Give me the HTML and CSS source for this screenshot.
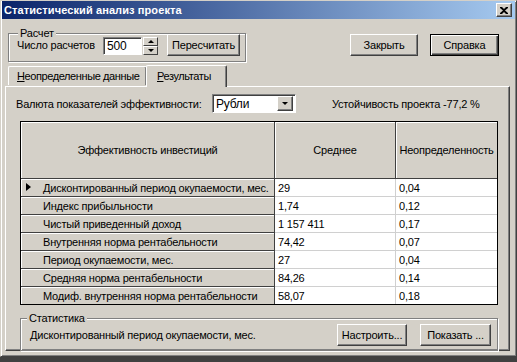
FILE: index.html
```html
<!DOCTYPE html>
<html>
<head>
  <title>Статистический анализ проекта</title>
  <link rel="stylesheet" href="styles.css">
</head>
<body>
  <div class="window">
    <div class="titlebar">
      <span class="title">Статистический анализ проекта</span>
      <span class="close">
        <svg width="8" height="7" viewBox="0 0 8 7"><path d="M0 0h2l2 2 2-2h2v1L5 3.5 8 6v1H6L4 5 2 7H0V6l3-2.5L0 1z" fill="#000"/></svg>
      </span>
    </div>

    <div class="toprow">
      <fieldset class="group calc">
        <legend>Расчет</legend>
        <div class="group-body">
          <span class="label">Число расчетов</span>
          <div class="spin">
            <div class="field">500</div>
            <div class="spin-btns">
              <span class="spin-btn"><i class="arrow up"></i></span>
              <span class="spin-btn"><i class="arrow down"></i></span>
            </div>
          </div>
          <button class="btn recalc">Пересчитать</button>
        </div>
      </fieldset>
      <div class="actions">
        <button class="btn close-btn">Закрыть</button>
        <button class="btn default help-btn">Справка</button>
      </div>
    </div>

    <div class="tabs">
      <div class="tab"><u>Н</u>еопределенные данные</div>
      <div class="tab active"><u>Р</u>езультаты</div>
    </div>

    <div class="panel">
      <div class="currency">
        <span class="label">Валюта показателей эффективности:</span>
        <div class="combo">
          <span class="combo-value">Рубли</span>
          <span class="combo-btn"><i class="arrow down"></i></span>
        </div>
        <span class="stability">Устойчивость проекта -77,2 %</span>
      </div>

      <table class="grid">
        <colgroup>
          <col class="c1"><col class="c2"><col class="c3">
        </colgroup>
        <thead>
          <tr>
            <th>Эффективность инвестиций</th>
            <th>Среднее</th>
            <th>Неопределенность</th>
          </tr>
        </thead>
        <tbody>
          <tr class="current"><th><i class="marker"></i>Дисконтированный период окупаемости, мес.</th><td>29</td><td>0,04</td></tr>
          <tr><th>Индекс прибыльности</th><td>1,74</td><td>0,12</td></tr>
          <tr><th>Чистый приведенный доход</th><td>1 157 411</td><td>0,17</td></tr>
          <tr><th>Внутренняя норма рентабельности</th><td>74,42</td><td>0,07</td></tr>
          <tr><th>Период окупаемости, мес.</th><td>27</td><td>0,04</td></tr>
          <tr><th>Средняя норма рентабельности</th><td>84,26</td><td>0,14</td></tr>
          <tr><th>Модиф. внутренняя норма рентабельности</th><td>58,07</td><td>0,18</td></tr>
        </tbody>
      </table>

      <fieldset class="group stats">
        <legend>Статистика</legend>
        <div class="group-body">
          <span class="label">Дисконтированный период окупаемости, мес.</span>
          <button class="btn setup-btn">Настроить...</button>
          <button class="btn show-btn">Показать ...</button>
        </div>
      </fieldset>
    </div>
  </div>
</body>
</html>
```

FILE: styles.css
```css
* {
  box-sizing: border-box;
}

html, body {
  margin: 0;
  padding: 0;
}

body {
  width: 517px;
  height: 362px;
  background: #404040;
  font-family: "Liberation Sans", Arial, sans-serif;
  font-size: 11px;
  letter-spacing: -0.2px;
  color: #000;
  overflow: hidden;
}

.window {
  width: 517px;
  height: 357px;
  background: #d4d0c8;
  border: 1px solid;
  border-color: #d4d0c8 #404040 #404040 #d4d0c8;
  box-shadow: inset 1px 1px #fff, inset -1px -1px #808080;
}

/* title bar */

.titlebar {
  height: 18px;
  margin: 0 1px;
  display: flex;
  align-items: center;
  justify-content: space-between;
  padding: 0 3px 0 2px;
  background: linear-gradient(to right, #0a246a, #a6caf0);
}

.title {
  color: #fff;
  font-weight: bold;
  font-size: 11px;
  letter-spacing: 0.1px;
}

.close {
  width: 16px;
  height: 14px;
  display: flex;
  align-items: center;
  justify-content: center;
  background: #d4d0c8;
  border: 1px solid;
  border-color: #fff #404040 #404040 #fff;
  box-shadow: inset -1px -1px #808080;
}

/* shared controls */

.btn {
  font: inherit;
  letter-spacing: inherit;
  color: #000;
  margin: 0;
  padding: 0;
  height: 22px;
  background: #d4d0c8;
  border: 1px solid;
  border-color: #fff #404040 #404040 #fff;
  box-shadow: inset -1px -1px #808080;
}

.btn.default {
  border-color: #000;
  box-shadow: inset 1px 1px #fff, inset -1px -1px #404040, inset -2px -2px #808080;
}

.group {
  margin: 0;
  border: 1px solid #808080;
  box-shadow: inset 1px 1px #fff, 1px 1px #fff;
}

.group legend {
  padding: 0 2px;
  line-height: 13px;
  background: #d4d0c8;
}

.group-body {
  display: flex;
  align-items: center;
}

.arrow {
  display: block;
  width: 0;
  height: 0;
  border-left: 3px solid transparent;
  border-right: 3px solid transparent;
}

.arrow.up {
  border-bottom: 3px solid #000;
}

.arrow.down {
  border-top: 3px solid #000;
}

/* top row */

.toprow {
  display: flex;
  align-items: flex-start;
  margin-top: 8px;
  padding: 0 17px 0 7px;
}

.calc {
  width: 238px;
  padding: 0 5px 5px 8px;
}

.calc legend {
  margin-left: 1px;
}

.calc .group-body {
  margin-top: -6px;
}

.calc .label {
  width: 86px;
}

.spin {
  display: flex;
  height: 18px;
  margin-top: 1px;
}

.field {
  width: 39px;
  height: 18px;
  padding: 1px 3px;
  line-height: 14px;
  font-size: 12px;
  background: #fff;
  border: 1px solid;
  border-color: #808080 #fff #fff #808080;
  box-shadow: inset 1px 1px #404040;
}

.spin-btns {
  display: flex;
  flex-direction: column;
  margin-left: 1px;
}

.spin-btn {
  width: 15px;
  height: 9px;
  display: flex;
  align-items: center;
  justify-content: center;
  background: #d4d0c8;
  border: 1px solid;
  border-color: #fff #404040 #404040 #fff;
}

.recalc {
  width: 73px;
  margin-left: 9px;
}

.actions {
  display: flex;
  gap: 12px;
  margin-left: auto;
  margin-top: 7px;
}

.close-btn {
  width: 68px;
}

.help-btn {
  width: 69px;
}

/* tabs */

.tabs {
  display: flex;
  align-items: flex-end;
  height: 22px;
  margin-top: 2px;
  padding-left: 7px;
  position: relative;
  z-index: 1;
}

.tab {
  height: 19px;
  padding: 3px 0 0 8px;
  background: #d4d0c8;
  border: 1px solid;
  border-bottom: none;
  border-color: #fff #404040 #404040 #fff;
  border-radius: 2px 2px 0 0;
  box-shadow: inset -1px 0 #808080;
  letter-spacing: -0.4px;
}

.tab:first-child {
  width: 139px;
  margin-bottom: 1px;
}

.tab.active {
  width: 81px;
  height: 22px;
  margin-left: -1px;
  margin-bottom: -1px;
  padding: 4px 0 0 10px;
}

/* page */

.panel {
  height: 265px;
  margin: 0 6px 0 4px;
  border: 1px solid;
  border-color: #fff #404040 #404040 #fff;
  box-shadow: inset -1px -1px #808080;
  padding-top: 7px;
}

.currency {
  display: flex;
  align-items: center;
  height: 19px;
  padding-left: 10px;
}

.currency .label {
  width: 196px;
}

.combo {
  width: 84px;
  height: 19px;
  display: flex;
  background: #fff;
  border: 1px solid;
  border-color: #808080 #fff #fff #808080;
  box-shadow: inset 1px 1px #404040;
  padding: 2px 2px 2px 3px;
}

.combo-value {
  flex: 1;
  line-height: 14px;
  font-size: 12px;
}

.combo-btn {
  width: 16px;
  height: 15px;
  margin-top: -1px;
  display: flex;
  align-items: center;
  justify-content: center;
  background: #d4d0c8;
  border: 1px solid;
  border-color: #fff #404040 #404040 #fff;
  box-shadow: inset -1px -1px #808080;
}

.stability {
  margin-left: 36px;
}

/* grid */

.grid {
  width: 478px;
  margin: 8px 0 0 14px;
  table-layout: fixed;
  border-collapse: separate;
  border-spacing: 0;
  border: 1px solid #000;
  background: #fff;
}

.grid .c1 { width: 254px; }
.grid .c2 { width: 121px; }
.grid .c3 { width: 101px; }

.grid th {
  font-weight: normal;
  background: #d4d0c8;
  border-right: 1px solid #404040;
  border-bottom: 1px solid #404040;
  box-shadow: inset 1px 1px #fff;
  white-space: nowrap;
  overflow: hidden;
}

.grid thead th {
  height: 57px;
  text-align: center;
}

.grid thead th:last-child {
  border-right: none;
  padding: 0 2px;
}

.grid tbody th {
  height: 18px;
  text-align: left;
  padding: 0 0 0 22px;
  position: relative;
}

.grid td {
  height: 18px;
  padding: 0 0 0 3px;
  border-right: 1px solid #d0d0d0;
  border-bottom: 1px solid #d0d0d0;
  white-space: nowrap;
}

.grid td:last-child {
  border-right: none;
}

.grid tbody tr:last-child th,
.grid tbody tr:last-child td {
  border-bottom: none;
  height: 17px;
}

.marker {
  position: absolute;
  left: 5px;
  top: 4px;
  width: 0;
  height: 0;
  border-top: 4px solid transparent;
  border-bottom: 4px solid transparent;
  border-left: 5px solid #000;
}

/* statistics */

.stats {
  width: 478px;
  margin: 7px 0 0 14px;
  padding: 0 6px 4px 9px;
}

.stats legend {
  margin-left: -3px;
}

.stats .group-body {
  margin-top: -1px;
}

.stats .label {
  flex: 1;
}

.setup-btn {
  width: 70px;
}

.show-btn {
  width: 71px;
  margin-left: 13px;
}
```
